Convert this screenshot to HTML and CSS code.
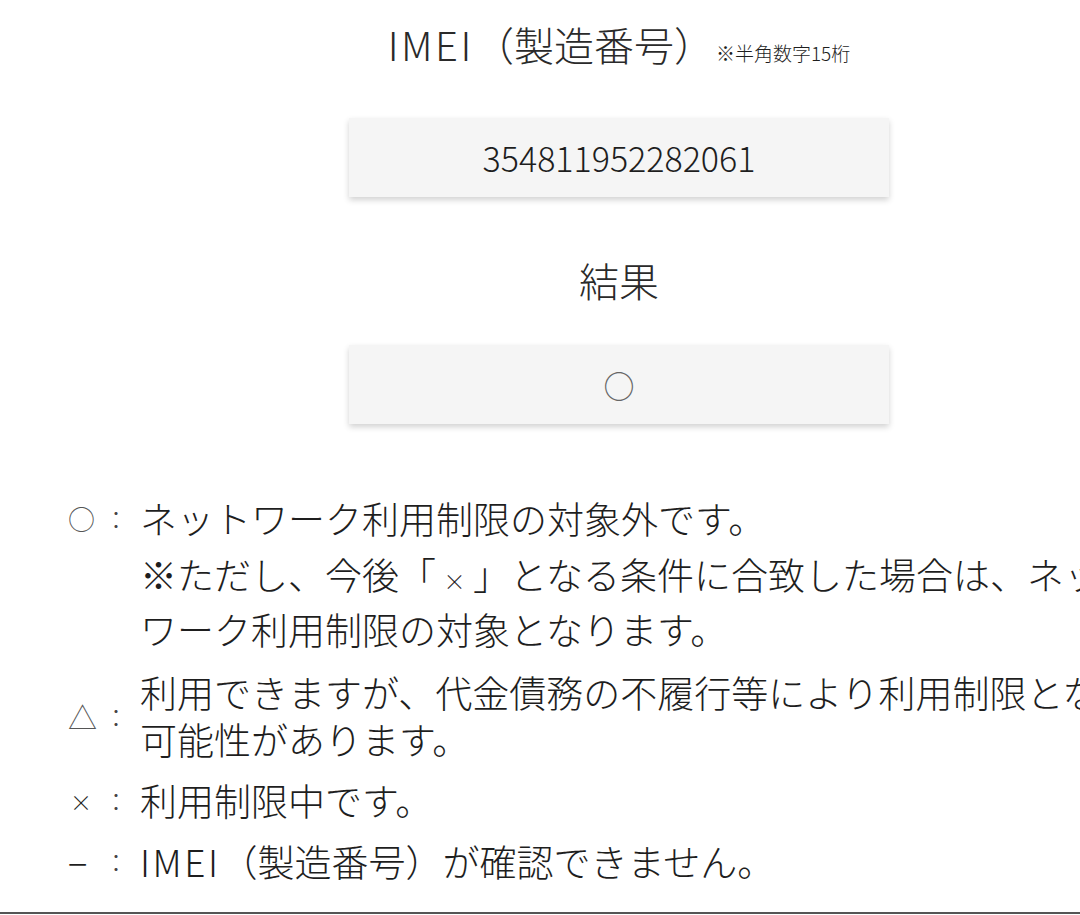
FILE: index.html
```html
<!DOCTYPE html>
<html lang="ja">

<head>
    <meta charset="utf-8">
    <title>ネットワーク利用制限確認</title>
    <link rel="stylesheet" href="styles.css">
</head>

<body>
    <div class="page">
        <h1 class="label"><span class="latin">IMEI</span>（製造番号）<small class="note">※半角数字15桁</small></h1>

        <div class="result-box">354811952282061</div>

        <h2 class="label">結果</h2>

        <div class="result-box">
            <span class="result-mark">○</span>
        </div>

        <ul class="legend">
            <li class="legend-row">
                <span class="mark mark-circle">○</span>
                <span class="colon">：</span>
                <span class="desc">ネットワーク利用制限の対象外です。</span>
            </li>
            <li class="legend-note">
                ※ただし、今後「<span class="wide">×</span>」となる条件に合致した場合は、ネットワーク利用制限の対象となります。
            </li>
            <li class="legend-row">
                <span class="mark mark-triangle">△</span>
                <span class="colon">：</span>
                <span class="desc">利用できますが、代金債務の不履行等により利用制限となる可能性があります。</span>
            </li>
            <li class="legend-row">
                <span class="mark mark-cross">×</span>
                <span class="colon">：</span>
                <span class="desc">利用制限中です。</span>
            </li>
            <li class="legend-row">
                <span class="mark mark-dash">−</span>
                <span class="colon">：</span>
                <span class="desc"><span class="latin">IMEI</span>（製造番号）が確認できません。</span>
            </li>
        </ul>

        <div class="page-end"></div>
    </div>
</body>

</html>
```

FILE: styles.css
```css
html,
body {
    margin: 0;
    padding: 0;
    overflow: hidden;
    background: #fff;
}

body {
    font-family: 'Noto Sans CJK JP', 'Noto Sans', sans-serif;
    color: #1e1e1e;
    width: 1080px;
}

.page {
    width: 1238px;
    padding-top: 14px;
}

.label {
    margin: 0;
    text-align: center;
    font-size: 40px;
    font-weight: 300;
    line-height: 60px;
    color: #2a2a2a;
}

.latin {
    letter-spacing: 2.5px;
}

.note {
    font-size: 19px;
    margin-left: 2px;
    color: #1e1e1e;
}

h1.label {
    margin-bottom: 35px;
}

h2.label {
    margin-top: 53px;
    margin-bottom: 35px;
}

.result-box {
    width: 540px;
    height: 79px;
    margin: 0 auto;
    background: #f5f5f5;
    box-shadow: 0 3px 6px rgba(0, 0, 0, 0.18);
    display: flex;
    align-items: center;
    justify-content: center;
    font-size: 34px;
    font-weight: 300;
    color: #1e1e1e;
}

.result-mark {
    font-size: 31px;
    font-weight: 400;
    color: #666;
}

.legend {
    list-style: none;
    margin: 71px 0 0;
    padding: 0 0 0 68px;
    font-size: 37px;
    font-weight: 300;
}

.legend-row {
    display: grid;
    grid-template-columns: 36px 36px 1010px;
    align-items: center;
    line-height: 47px;
    margin-bottom: 14px;
}

.legend-note {
    margin: -9px 0 12px 72px;
    width: 1010px;
    line-height: 55px;
}

.wide {
    display: inline-block;
    width: 37px;
    font-size: 22px;
    line-height: 1;
    text-align: center;
}

.mark {
    color: #555;
    line-height: 1;
}

.mark-circle {
    font-size: 27px;
}

.mark-triangle {
    font-size: 29px;
}

.mark-cross {
    font-size: 22px;
    padding-left: 2px;
    color: #1e1e1e;
}

.mark-dash {
    font-size: 36px;
    color: #1e1e1e;
}

.colon {
    font-size: 24px;
    color: #444;
}

.page-end {
    margin-top: 27px;
    border-top: 2px solid #555;
    width: 1080px;
}
```
